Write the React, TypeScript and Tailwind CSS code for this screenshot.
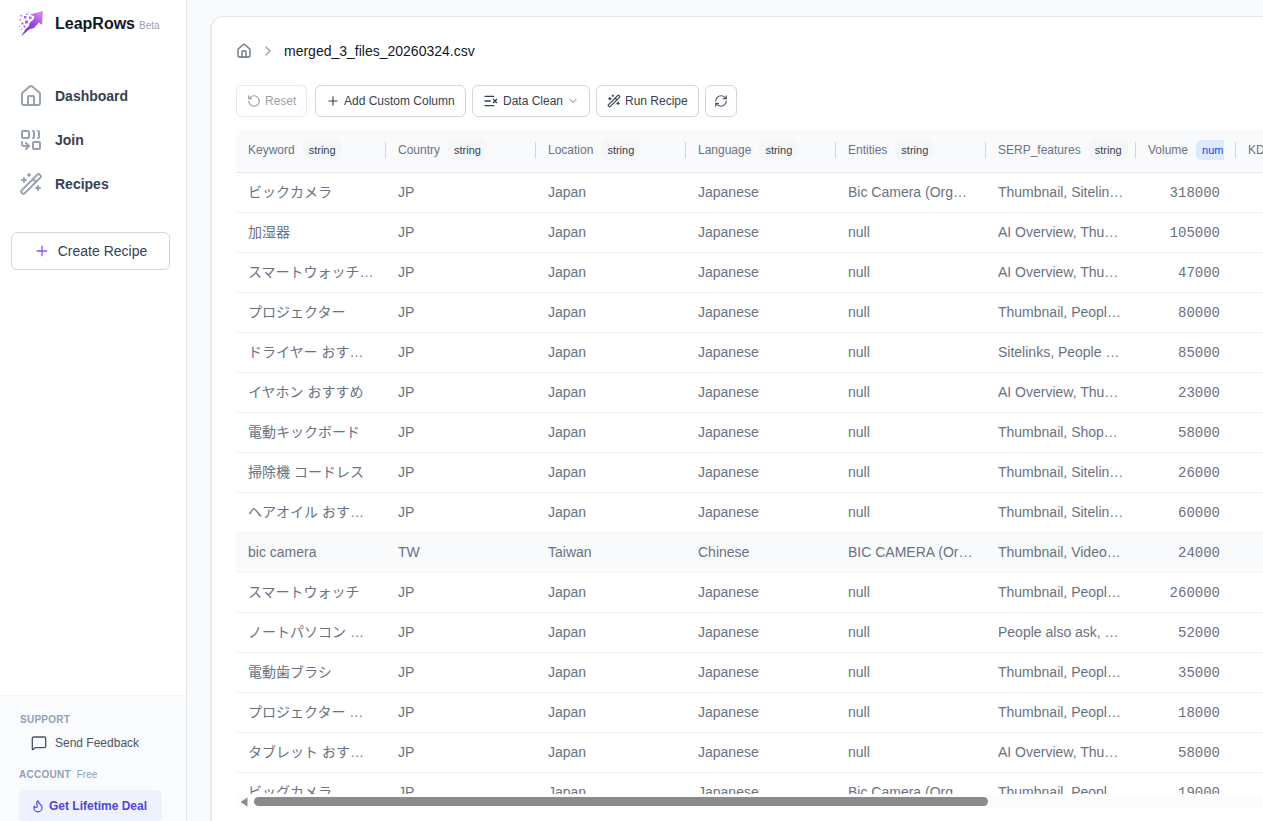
import React from "react";
import {
  ChevronDown,
  ChevronRight,
  Combine,
  Flame,
  Home,
  ListX,
  MessageSquare,
  Plus,
  RefreshCw,
  RotateCcw,
  WandSparkles,
} from "lucide-react";

const columns = [
  { name: "Keyword", type: "string" },
  { name: "Country", type: "string" },
  { name: "Location", type: "string" },
  { name: "Language", type: "string" },
  { name: "Entities", type: "string" },
  { name: "SERP_features", type: "string" },
];

const jp = ["JP", "Japan", "Japanese"];

const rows: string[][] = [
  ["ビックカメラ", ...jp, "Bic Camera (Org…", "Thumbnail, Sitelin…", "318000"],
  ["加湿器", ...jp, "null", "AI Overview, Thu…", "105000"],
  ["スマートウォッチ…", ...jp, "null", "AI Overview, Thu…", "47000"],
  ["プロジェクター", ...jp, "null", "Thumbnail, Peopl…", "80000"],
  ["ドライヤー おす…", ...jp, "null", "Sitelinks, People …", "85000"],
  ["イヤホン おすすめ", ...jp, "null", "AI Overview, Thu…", "23000"],
  ["電動キックボード", ...jp, "null", "Thumbnail, Shop…", "58000"],
  ["掃除機 コードレス", ...jp, "null", "Thumbnail, Sitelin…", "26000"],
  ["ヘアオイル おす…", ...jp, "null", "Thumbnail, Sitelin…", "60000"],
  ["bic camera", "TW", "Taiwan", "Chinese", "BIC CAMERA (Or…", "Thumbnail, Video…", "24000"],
  ["スマートウォッチ", ...jp, "null", "Thumbnail, Peopl…", "260000"],
  ["ノートパソコン …", ...jp, "null", "People also ask, …", "52000"],
  ["電動歯ブラシ", ...jp, "null", "Thumbnail, Peopl…", "35000"],
  ["プロジェクター …", ...jp, "null", "Thumbnail, Peopl…", "18000"],
  ["タブレット おす…", ...jp, "null", "AI Overview, Thu…", "58000"],
  ["ビッグカメラ", ...jp, "Bic Camera (Org…", "Thumbnail, Peopl…", "19000"],
];

const Logo = () => (
  <svg width="26" height="28" viewBox="0 0 26 28" className="shrink-0">
    <defs>
      <linearGradient id="arrow" x1="0.9" y1="0" x2="0.2" y2="1">
        <stop offset="0" stopColor="#e58be6" />
        <stop offset="0.5" stopColor="#9848e0" />
        <stop offset="1" stopColor="#7434da" />
      </linearGradient>
    </defs>
    <path
      d="M25 1 24 15 21 12.5 16 18 11 19.5 3 26.5 8 18.5 11 16 11.5 13 15.5 9.5 16.5 6.5 12 4.5Z"
      fill="url(#arrow)"
    />
    <g fill="#a566e8">
      <path d="M8 3.5h1.5v1.5H8zM11 6.5h2.5V9H11zM6 6h2.5v2.5H6zM2.5 5H4v1.5H2.500zM1.500 9H3v1.500H1.500zM7 10.500h3v3H7zM3.500 12.500h2v2h-2zM1 15.500h1.200v1.200H1zM5.500 15.500h2v2h-2zM3 18.500h1.200v1.200H3zM10 1.500h1v1h-1z" />
    </g>
  </svg>
);

interface NavItemProps {
  icon: React.ReactNode;
  label: string;
}
const NavItem = ({ icon, label }: NavItemProps) => (
  <div className="flex h-11 items-center gap-3 text-sm font-bold text-gray-700">
    <span className="text-gray-400">{icon}</span>
    {label}
  </div>
);

const toolButton =
  "flex h-8 items-center rounded-md border border-gray-300 bg-white text-xs text-gray-700";

const App = () => {
  return (
    <div className="flex h-[821px] w-[1263px] overflow-hidden bg-[#f9fafb] font-['Liberation_Sans','Noto_Sans_CJK_JP',sans-serif]">
      {/* Sidebar */}
      <aside className="flex w-[187px] shrink-0 flex-col border-r border-gray-200 bg-white">
        <div className="flex h-12 items-center pl-[18px]">
          <Logo />
          <span className="ml-[11px] text-base font-bold text-gray-900">LeapRows</span>
          <span className="mt-[3px] ml-1 text-[10px] text-gray-400">Beta</span>
        </div>
        <nav className="mt-[26px] pl-[19px]">
          <NavItem icon={<Home size={24} />} label="Dashboard" />
          <NavItem icon={<Combine size={24} />} label="Join" />
          <NavItem icon={<WandSparkles size={24} />} label="Recipes" />
        </nav>
        <button className="mt-[26px] ml-[11px] flex h-[38px] w-[159px] items-center justify-center gap-2 rounded-md border border-gray-300 text-sm text-gray-700">
          <Plus size={16} className="text-violet-500" />
          Create Recipe
        </button>
        <div className="mt-auto h-[126px] border-t border-gray-100 bg-[#f9fbfc] pl-[19px]">
          <div className="mt-[18px] ml-px text-[10px] leading-3 font-bold tracking-[0.25px] text-slate-400">
            SUPPORT
          </div>
          <div className="mt-[9px] ml-3 flex h-4 items-center gap-2 text-xs text-gray-600">
            <MessageSquare size={16} />
            Send Feedback
          </div>
          <div className="mt-[18px] flex gap-1.5 text-[10px] leading-3 text-slate-400">
            <span className="font-bold tracking-[0.25px]">ACCOUNT</span>
            <span>Free</span>
          </div>
          <div className="mt-[9px] flex h-8 w-[143px] items-center gap-1 rounded-md bg-indigo-50 pl-3 text-xs font-bold text-[#5046d6]">
            <Flame size={14} />
            Get Lifetime Deal
          </div>
        </div>
      </aside>

      {/* Main card */}
      <main className="mt-4 ml-6 flex min-w-0 grow flex-col rounded-tl-xl border-t border-l border-gray-200 bg-white pl-6 shadow-sm">
        <div className="mt-6 flex h-5 items-center text-sm text-gray-900">
          <Home size={16} className="text-gray-500" />
          <ChevronRight size={16} className="mx-2 text-gray-400" />
          merged_3_files_20260324.csv
        </div>

        {/* Toolbar */}
        <div className="mt-6 flex">
          <button className={toolButton + " w-[71px] gap-1 pl-2.5 opacity-50"}>
            <RotateCcw size={14} />
            Reset
          </button>
          <button className={toolButton + " ml-2 w-[151px] gap-1 pl-2.5"}>
            <Plus size={14} />
            Add Custom Column
          </button>
          <button className={toolButton + " ml-1.5 w-[118px] gap-1 pl-2.5"}>
            <ListX size={16} />
            Data Clean
            <ChevronDown size={12} className="text-gray-500" />
          </button>
          <button className={toolButton + " ml-1.5 w-[103px] gap-1 pl-2.5"}>
            <WandSparkles size={14} />
            Run Recipe
          </button>
          <button className={toolButton + " ml-1.5 w-8 justify-center"}>
            <RefreshCw size={14} className="text-gray-600" />
          </button>
        </div>

        {/* Table */}
        <div className="mt-3 h-[665px] overflow-hidden">
          <div className="flex h-11 w-[1150px] border-b border-gray-200 bg-[#f9fafb] pb-0.5 text-xs text-gray-500">
            {columns.map((col) => (
              <div key={col.name} className="flex w-[150px] items-center pl-3">
                {col.name}
                <span className="ml-2 rounded-md bg-[#f4f6f7] px-1.5 text-[11px] leading-5 text-gray-700">
                  {col.type}
                </span>
                <span className="ml-auto h-4 w-px bg-gray-300" />
              </div>
            ))}
            <div className="flex w-[100px] items-center pl-3">
              Volume
              <span className="ml-2 w-7 overflow-hidden rounded-l-md bg-blue-100 pl-1.5 text-[11px] leading-5 text-blue-700">
                num
              </span>
              <span className="ml-auto h-4 w-px bg-gray-300" />
            </div>
            <div className="flex items-center pl-3">KD</div>
          </div>
          {rows.map((row, i) => (
            <div
              key={i}
              className={
                "flex h-10 w-[1150px] items-center border-b border-gray-100 text-sm text-gray-500 " +
                (i === 9 ? "bg-[#f9fafb]" : "")
              }
            >
              {row.slice(0, 6).map((cell, j) => (
                <div key={j} className="w-[150px] pb-0.5 pl-3 whitespace-nowrap">
                  {cell}
                </div>
              ))}
              <div className="w-[84px] text-right font-['Liberation_Mono',monospace]">
                {row[6]}
              </div>
            </div>
          ))}
        </div>

        {/* Horizontal scrollbar */}
        <div className="flex h-[15px] items-center bg-[#fcfcfc] pl-1">
          <svg width="8" height="10" viewBox="0 0 8 10">
            <path d="M7.5 0.5v9L0.5 5z" fill="#8b8b8b" />
          </svg>
          <div className="ml-1.5 h-[9px] w-[734px] rounded-full bg-[#8b8b8b]" />
        </div>
      </main>
    </div>
  );
};

export default App;
